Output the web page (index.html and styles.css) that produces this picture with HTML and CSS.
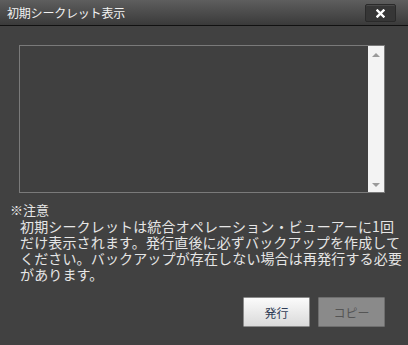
FILE: index.html
```html
<!DOCTYPE html>
<html lang="ja">
<head>
  <meta charset="UTF-8">
  <meta name="viewport" content="width=device-width, initial-scale=1.0">
  <title>初期シークレット表示</title>
  <link rel="stylesheet" href="styles.css">
</head>
<body>
  <div class="dialog">
    <div class="titlebar">
      <span class="title">初期シークレット表示</span>
      <button class="close">
        <svg width="9" height="9" viewBox="0 0 9 9">
          <path d="M1.5 1.5 L7.5 7.5 M7.5 1.5 L1.5 7.5" stroke="#fff" stroke-width="2.4" stroke-linecap="square"/>
        </svg>
      </button>
    </div>

    <div class="content">
      <div class="secret-box">
        <div class="secret-text"></div>
        <div class="scrollbar">
          <span class="arrow up"></span>
          <span class="arrow down"></span>
        </div>
      </div>

      <div class="note">
        <div class="note-head">※注意</div>
        <div class="note-body">
          初期シークレットは統合オペレーション・ビューアーに1回<br>
          だけ表示されます。発行直後に必ずバックアップを作成して<br>
          ください。バックアップが存在しない場合は再発行する必要<br>
          があります。
        </div>
      </div>

      <div class="actions">
        <button class="btn">発行</button>
        <button class="btn" disabled>コピー</button>
      </div>
    </div>
  </div>
</body>
</html>
```

FILE: styles.css
```css
body {
  margin: 0;
  background: #414141;
  font-family: "Noto Sans CJK JP", "Noto Sans", sans-serif;
}
.dialog {
  width: 408px;
  height: 345px;
  background: #414141;
}
.titlebar {
  height: 25px;
  display: flex;
  align-items: center;
  justify-content: space-between;
  padding: 0 12px 0 7px;
  background: linear-gradient(#5e5e5e, #3a3a3a);
  border-bottom: 1px solid #111;
}
.title {
  color: #f2f2f2;
  font-size: 12px;
  line-height: 14px;
  letter-spacing: -0.2px;
}
.close {
  width: 31px;
  height: 18px;
  margin-top: 1px;
  padding: 0;
  display: flex;
  align-items: center;
  justify-content: center;
  background: #363636;
  border: 1px solid #2a2a2a;
  border-radius: 2px;
  box-shadow: inset 0 1px 0 #4a4a4a;
}
.content {
  padding: 19px 23px 0 19px;
}
.secret-box {
  display: flex;
  height: 146px;
  border: 1px solid #7a7a7a;
}
.secret-text {
  flex: 1;
  background: #404040;
}
.scrollbar {
  width: 16px;
  background: #f3f3f3;
  display: flex;
  flex-direction: column;
  justify-content: space-between;
  align-items: center;
  padding: 7px 0 5px;
}
.arrow {
  width: 0;
  height: 0;
  border-left: 4px solid transparent;
  border-right: 4px solid transparent;
}
.arrow.up {
  border-bottom: 4px solid #9a9a9a;
}
.arrow.down {
  border-top: 4px solid #9a9a9a;
}
.note {
  margin: 9px 0 0 -9px;
  color: #e6e6e6;
  font-size: 14px;
  line-height: 16px;
  white-space: nowrap;
}
.note-head {
  font-size: 13px;
}
.note-body {
  padding-left: 10px;
  letter-spacing: 0.15px;
}
.actions {
  display: flex;
  justify-content: flex-end;
  gap: 8px;
  margin-top: 15px;
}
.btn {
  width: 67px;
  height: 30px;
  padding: 0;
  font-family: inherit;
  font-size: 12px;
  color: #2e3b55;
  background: linear-gradient(#fbfbfb, #dadada);
  border: 1px solid #8a8a8a;
  border-radius: 1px;
}
.btn:disabled {
  color: #555;
  background: #8a8a8a;
  border-color: #6e6e6e;
}
```
